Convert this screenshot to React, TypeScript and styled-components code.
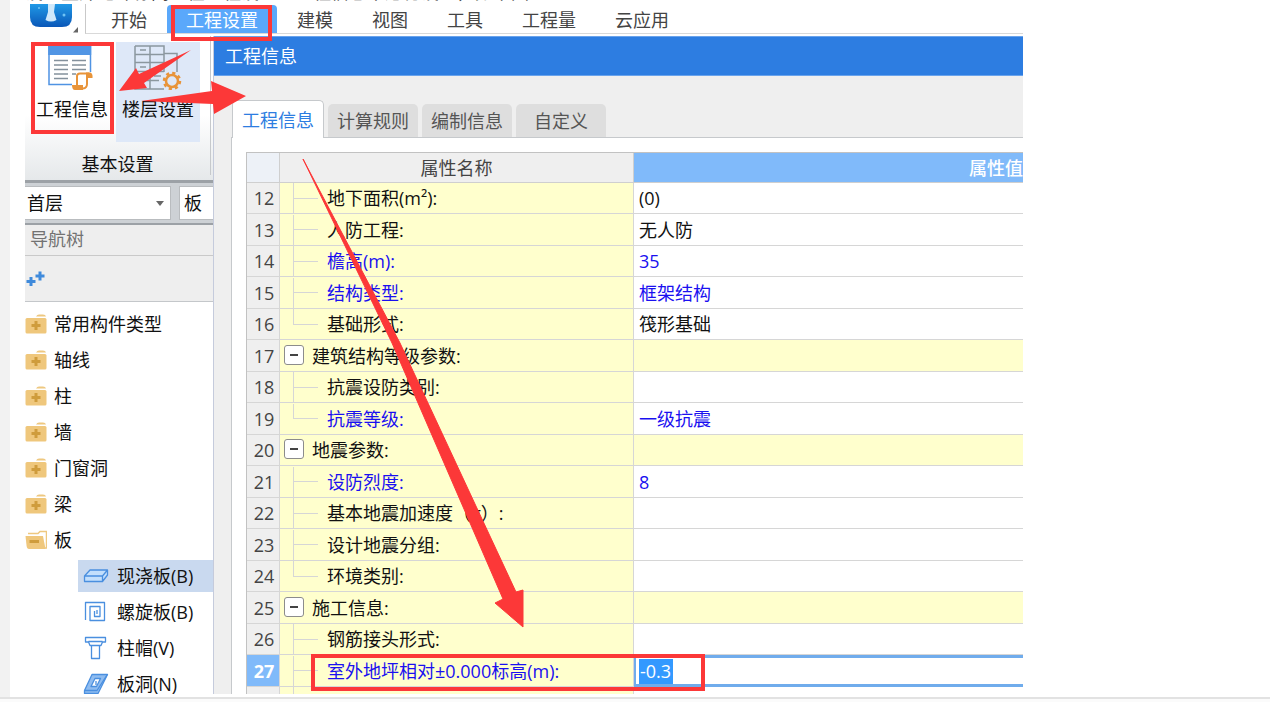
import React from "react";
import styled, { createGlobalStyle } from "styled-components";

const Global = createGlobalStyle`
  *, *::before, *::after { box-sizing: border-box; }
  body { margin: 0; background: #fff; }
  body, button, input, select {
    font-family: "Open Sans", "Noto Sans CJK SC", sans-serif;
    font-size: 18px;
    line-height: 26px;
  }
  button { border: 0; padding: 0; background: none; color: inherit; white-space: nowrap; }
`;

const Page = styled.main`
  position: relative;
  display: flex;
  flex-direction: column;
  height: 100vh;
  overflow: hidden;
`;

const Body = styled.div`
  flex: 1;
  min-height: 0;
  display: flex;
  flex-direction: column;
  padding: 0 247px 3px 15px;
  border-left: 10px solid #f2f2f2;
`;

const Footer = styled.footer`
  height: 5px;
  border-top: 2px solid #e2e2e2;
  background: #fbfbfb;
`;

const Caption = styled.p`
  display: flex;
  align-items: flex-end;
  height: 3px;
  margin: 0 0 1px;
  overflow: hidden;
  color: #444;
  white-space: nowrap;
  line-height: 22px;
`;

const Window = styled.div`
  flex: 1;
  min-height: 0;
  display: flex;
  flex-direction: column;
  overflow: hidden;
`;

const MenuBar = styled.header`
  display: flex;
  height: 32px;
  padding-bottom: 2px;
`;

const LogoBox = styled.div`
  width: 60px;
  padding-left: 5px;
`;

const Menu = styled.nav`
  flex: 1;
  display: flex;
  align-items: flex-end;
  gap: 1px;
  padding-left: 6px;
  border-left: 1px solid #c9c9c9;
  border-bottom: 1px solid #d9d9d9;
`;

const MenuTab = styled.button<{ $active?: boolean }>`
  height: 28px;
  padding: 2px 19px 0;
  border-radius: 4px 4px 0 0;
  background: ${(p) => (p.$active ? "#5aa8fb" : "transparent")};
  color: ${(p) => (p.$active ? "#fff" : "#444")};
`;

const Main = styled.div`
  flex: 1;
  min-height: 0;
  display: flex;
`;

const Side = styled.aside`
  flex: none;
  display: flex;
  flex-direction: column;
  width: 188px;
`;

const Ribbon = styled.section`
  display: flex;
  flex-direction: column;
  height: 147px;
  padding: 6px 0 2px 7px;
  border-bottom: 3px solid #9ca1a6;
  background:
    linear-gradient(#c6c9cc, #c6c9cc) 185px 0 / 1px 139px no-repeat,
    linear-gradient(#fff 55%, #e5e8ea);
`;

const RibbonButtons = styled.div`
  display: flex;
  gap: 4px;
`;

const RibbonButton = styled.button<{ $lit?: boolean }>`
  display: flex;
  flex-direction: column;
  align-items: center;
  width: ${(p) => (p.$lit ? "84px" : "80px")};
  height: 100px;
  color: #111;
  background: ${(p) => (p.$lit ? "#dee8f8" : "transparent")};
`;

const RibbonIcon = styled.svg`
  width: 48px;
  height: 48px;
  margin-bottom: 6px;
`;

const RibbonTitle = styled.div`
  padding-top: 8px;
  padding-right: 10px;
  color: #111;
  text-align: center;
  line-height: 28px;
`;

const Pickers = styled.div`
  display: flex;
  gap: 8px;
  height: 42px;
  padding: 3px 0;
  border-bottom: 2px solid #9ca1a6;
  background: #cdd1d5;
`;

const Picker = styled.div<{ $wide?: boolean }>`
  display: flex;
  align-items: center;
  flex: ${(p) => (p.$wide ? "0 0 146px" : "1")};
  padding-right: 6px;
  overflow: hidden;
  border: 1px solid #b9bcbf;
  border-width: ${(p) => (p.$wide ? "1px 1px 1px 0" : "1px 0 1px 1px")};
  background: #fff;
`;

const PickerSelect = styled.select<{ $indent?: boolean }>`
  flex: 1;
  min-width: 0;
  padding: 0 0 0 ${(p) => (p.$indent ? "4px" : "2px")};
  border: 0;
  appearance: none;
  background: none;
  color: #111;
`;

const SideTitle = styled.h2`
  margin: 0;
  padding: 1px 5px 2px;
  border-bottom: 1px solid #c9c9c9;
  background: #eee;
  color: #727272;
  font-size: 18px;
  font-weight: 400;
  line-height: 27px;
`;

const SideTools = styled.div`
  height: 46px;
  padding: 12px 1px;
  border-bottom: 1px solid #c4c7ca;
  background: #eee;
`;

const ToolButton = styled.button`
  display: block;
`;

const Tree = styled.ul`
  flex: 1;
  min-height: 0;
  margin: 0;
  padding: 4px 0 0;
  overflow: hidden;
  list-style: none;
`;

const TreeItem = styled.li<{ $child?: boolean; $selected?: boolean }>`
  display: flex;
  align-items: center;
  gap: ${(p) => (p.$child ? "8px" : "7px")};
  height: ${(p) => (p.$child ? "32px" : "36px")};
  margin: ${(p) => (p.$child ? "2px 0 4px 53px" : "0")};
  padding-left: ${(p) => (p.$child ? "5px" : "0")};
  background: ${(p) => (p.$selected ? "#c9d9ef" : "transparent")};
  color: #111;
  white-space: nowrap;
`;

const Dialog = styled.section`
  flex: 1;
  min-width: 0;
  display: flex;
  flex-direction: column;
  border-left: 1px solid #c5cbdc;
  background: #efefef;
`;

const DialogTitle = styled.h1`
  margin: 0;
  padding: 0 11px;
  border: 1px solid #69a3ec;
  border-width: 1px 0;
  background: #2d7de1;
  color: #fff;
  font-size: 18px;
  font-weight: 400;
  line-height: 38px;
`;

const DialogTabs = styled.div`
  display: flex;
  align-items: flex-end;
  gap: 4px;
  height: 61px;
  padding-left: 18px;
`;

const DialogTab = styled.button<{ $active?: boolean }>`
  position: relative;
  width: ${(p) => (p.$active ? "92px" : "90px")};
  height: ${(p) => (p.$active ? "38px" : "33px")};
  margin-bottom: ${(p) => (p.$active ? "-1px" : "0")};
  border: ${(p) => (p.$active ? "1px solid #c6c9cc" : "0")};
  border-bottom: 0;
  border-radius: 5px 5px 0 0;
  background: ${(p) => (p.$active ? "#fff" : "#dedede")};
  color: ${(p) => (p.$active ? "#2d7de1" : "#555")};
`;

const Panel = styled.div`
  flex: 1;
  min-height: 0;
  margin-left: 17px;
  padding: 14px 0 0 14px;
  overflow: hidden;
  border: 1px solid #c6c9cc;
  border-width: 1px 0 0 1px;
  background: #fff;
`;

const Grid = styled.table`
  width: 100%;
  table-layout: fixed;
  border-collapse: separate;
  border-spacing: 0;
  border: 1px solid #c2c2c2;
  border-width: 1px 0 0 1px;
  color: #222;
`;

const HeadCell = styled.th<{ $kind: "corner" | "name" | "value" }>`
  width: ${(p) => ({ corner: "33px", name: "354px", value: "auto" })[p.$kind]};
  height: 30px;
  padding: 0;
  border: 0 solid #cfcfcf;
  border-width: 0 ${(p) => (p.$kind === "value" ? "0" : "1px")} 1px 0;
  background: ${(p) => ({ corner: "#edf1f7", name: "#efefef", value: "#80bafa" })[p.$kind]};
  color: ${(p) => (p.$kind === "value" ? "#fff" : "#444")};
  font-weight: ${(p) => (p.$kind === "value" ? "500" : "400")};
  text-align: ${(p) => (p.$kind === "value" ? "right" : "center")};
`;

const Row = styled.tr`
  height: 31px;
  &:nth-child(even) { height: 32px; }
`;

const NumberCell = styled.th<{ $current?: boolean }>`
  padding: 0 0 0 2px;
  border: 0 solid #d6d6d6;
  border-width: 0 1px 1px 0;
  background: ${(p) => (p.$current ? "#80bafa" : "#efefef")};
  color: ${(p) => (p.$current ? "#fff" : "#444")};
  font-weight: ${(p) => (p.$current ? "700" : "400")};
`;

const NameCell = styled.td<{ $blue?: boolean }>`
  height: inherit;
  padding: 0;
  border: 0 solid #d6d6d6;
  border-width: 0 1px 1px 0;
  background: #ffffcd;
  color: ${(p) => (p.$blue ? "#1a10f0" : "#111")};
`;

const NameLine = styled.div`
  display: flex;
  align-items: center;
  height: 30px;
  white-space: nowrap;
`;

const Branch = styled.span`
  display: flex;
  flex-direction: column;
  align-self: stretch;
  width: 25px;
  margin: 0 9px 0 13px;
`;

const BranchHalf = styled.span<{ $line: boolean; $arm?: boolean }>`
  flex: 1;
  border: 0 solid #d6d6d6;
  border-left-width: ${(p) => (p.$line ? "1px" : "0")};
  border-bottom-width: ${(p) => (p.$arm ? "1px" : "0")};
`;

const Toggle = styled.button`
  display: flex;
  align-items: center;
  justify-content: center;
  width: 20px;
  height: 20px;
  margin: 0 8px 2px 4px;
  border: 1px solid #8c8c8c;
  border-radius: 3px;
  background: #fff;
  color: #333;
`;

const ValueCell = styled.td<{ $group?: boolean; $blue?: boolean; $editing?: boolean }>`
  padding: 0 0 0 ${(p) => (p.$editing ? "3px" : "5px")};
  border: 0 solid #d6d6d6;
  border-bottom-width: 1px;
  background: ${(p) => (p.$group ? "#ffffcd" : "#fff")};
  color: ${(p) => (p.$blue ? "#1a10f0" : "#111")};
  ${(p) => p.$editing && "border: 3px solid #70acec; border-width: 3px 0 3px 2px;"}
`;

const ValueInput = styled.input`
  display: block;
  width: 34px;
  height: 25px;
  padding: 0 0 0 1px;
  border: 0;
  background: #3399ff;
  color: #fff;
  line-height: 25px;
`;

const Annotations = styled.svg`
  position: absolute;
  top: 0;
  left: 0;
  width: 1270px;
  height: 702px;
  pointer-events: none;
`;

const Logo = () => (
  <svg width="49" height="30" viewBox="0 0 49 30" aria-hidden="true">
    <defs>
      <linearGradient id="logo" x1="0" y1="0" x2="0" y2="1">
        <stop offset="0" stopColor="#2099e6" />
        <stop offset="1" stopColor="#0a57b8" />
      </linearGradient>
    </defs>
    <path d="M0 0H42V13Q42 23 32 23H10Q0 23 0 13Z" fill="url(#logo)" />
    <path d="M18 0H25L24 8L26.500 16Q21 19 15.500 16L18 8Z" fill="#cfe8fa" />
    <circle cx="34" cy="11" r="1.500" fill="#6fc3f5" />
    <circle cx="9" cy="4" r="1" fill="#6fc3f5" />
    <path d="M48 23V28.500H43Z" fill="#666" />
  </svg>
);

const InfoIcon = () => (
  <RibbonIcon viewBox="8 0 48 48" aria-hidden="true">
    <path d="M9 4V42.500H32M50.500 4V30" fill="none" stroke="#4f93e3" strokeWidth="1.500" />
    <rect x="8.200" y="4" width="43" height="9" fill="#5195e4" />
    <path d="M14 18.500H28M14 23H28M14 27.500H28M14 32H28M14 36.500H28M32 18.500H46M32 23H46M32 27.500H46M32 32H36" stroke="#84919c" strokeWidth="1.500" />
    <path d="M37 43V34Q37 31.500 40 31.500H49Q47 32 47 35V42Q47 46 43 46.500" fill="#fff" stroke="#e8943a" strokeWidth="2" />
    <path d="M46 30.500H50Q53 31 52.500 36H46ZM32 43H43V48H35Q32 48 32 43Z" fill="#e8943a" />
  </RibbonIcon>
);

const FloorIcon = () => (
  <RibbonIcon viewBox="3 0 48 48" aria-hidden="true">
    <path d="M4 4H33V30M4 4V47H33M19 4V47M4 12.500H33M4 20.500H33M4 29.500H33M4 38.500H28M33 11.500H46V30M9 8H15M9 25H15M9 34H15M23 34H30" fill="none" stroke="#8b979f" strokeWidth="1.500" />
    <circle cx="41" cy="39" r="10" fill="#dee8f8" />
    <circle cx="41" cy="39" r="6" fill="none" stroke="#e8943a" strokeWidth="2.500" />
    <circle cx="41" cy="39" r="8" fill="none" stroke="#e8943a" strokeWidth="2.500" strokeDasharray="3.200 3.080" />
  </RibbonIcon>
);

const FolderIcon = () => (
  <svg width="22" height="20" viewBox="0 0 22 20" aria-hidden="true">
    <path d="M11 2.500Q12 0.500 14 0.500H18Q20.500 0.500 21 2.500Z" fill="#eec880" />
    <rect x="0.500" y="4" width="21" height="15.500" rx="1.500" fill="#efc77c" />
    <path d="M11 7V16M6.500 11.500H15.500" stroke="#cf9c3c" strokeWidth="3" />
  </svg>
);

const OpenFolderIcon = () => (
  <svg width="22" height="20" viewBox="0 0 22 20" aria-hidden="true">
    <path d="M3 3.500H13L15 1.500H21.500V18H19" fill="#fff" stroke="#eec880" strokeWidth="1.500" />
    <path d="M0.500 6H18L20.500 19H4Q2 19 1.600 16Z" fill="#efc77c" />
    <path d="M4.500 11.500H14" stroke="#cf9c3c" strokeWidth="3" />
  </svg>
);

const stroke = { fill: "none", stroke: "#4a8fdf", strokeWidth: 1.3, strokeLinejoin: "round" as const };

const SlabIcon = () => (
  <svg width="26" height="24" viewBox="0 0 26 24" aria-hidden="true">
    <path d="M1.500 12L7 6H24.500V11L19.500 17.500H1.500ZM1.500 12H19.500V17.500M19.500 12L24.500 6" {...stroke} fill="#c3dffc" />
  </svg>
);

const SpiralIcon = () => (
  <svg width="26" height="24" viewBox="0 0 26 24" aria-hidden="true">
    <path d="M2.500 20V2.500H21.500V20.500H7V6.500H17V16.500H11.500V11" {...stroke} />
    <path d="M14 10V14" {...stroke} />
  </svg>
);

const CapIcon = () => (
  <svg width="26" height="24" viewBox="0 0 26 24" aria-hidden="true">
    <path d="M2.500 1.500H22.500V6H19.500L18 9.500H7L5.500 6H2.500ZM5.500 5.500H19.500M8.500 9.500V22.500H16.500V9.500" {...stroke} />
  </svg>
);

const HoleIcon = () => (
  <svg width="26" height="24" viewBox="0 0 26 24" aria-hidden="true">
    <path d="M9 2.500H24.500L15 21.500H1.500V18.500Z" {...stroke} fill="#8fbcf0" />
    <path d="M1.500 18.500H14L24 3" {...stroke} />
    <path d="M12 6.500H17.500L13.500 14.500H8Z" {...stroke} fill="#fff" />
    <path d="M13 9V13" {...stroke} />
  </svg>
);

const menus = ["开始", "工程设置", "建模", "视图", "工具", "工程量", "云应用"];
const dialogTabs = ["工程信息", "计算规则", "编制信息", "自定义"];
const folders = ["常用构件类型", "轴线", "柱", "墙", "门窗洞", "梁"];
const slabs = [
  { label: "现浇板(B)", Icon: SlabIcon },
  { label: "螺旋板(B)", Icon: SpiralIcon },
  { label: "柱帽(V)", Icon: CapIcon },
  { label: "板洞(N)", Icon: HoleIcon },
];

type Property = {
  no: number;
  name: string;
  value?: string;
  blue?: boolean;
  group?: boolean;
  last?: boolean;
  editing?: boolean;
};

const properties: Property[] = [
  { no: 12, name: "地下面积(m²):", value: "(0)" },
  { no: 13, name: "人防工程:", value: "无人防" },
  { no: 14, name: "檐高(m):", value: "35", blue: true },
  { no: 15, name: "结构类型:", value: "框架结构", blue: true },
  { no: 16, name: "基础形式:", value: "筏形基础", last: true },
  { no: 17, name: "建筑结构等级参数:", group: true },
  { no: 18, name: "抗震设防类别:" },
  { no: 19, name: "抗震等级:", value: "一级抗震", blue: true, last: true },
  { no: 20, name: "地震参数:", group: true },
  { no: 21, name: "设防烈度:", value: "8", blue: true },
  { no: 22, name: "基本地震加速度（g）:" },
  { no: 23, name: "设计地震分组:" },
  { no: 24, name: "环境类别:", last: true },
  { no: 25, name: "施工信息:", group: true },
  { no: 26, name: "钢筋接头形式:" },
  { no: 27, name: "室外地坪相对±0.000标高(m):", value: "-0.3", blue: true, editing: true },
];

const PropertyRow = ({ no, name, value, blue, group, last, editing }: Property) => (
  <Row>
    <NumberCell scope="row" $current={editing}>{no}</NumberCell>
    <NameCell $blue={blue}>
      <NameLine>
        {group ? (
          <Toggle aria-label="折叠">
            <svg width="8" height="2" aria-hidden="true"><rect width="8" height="2" fill="#444" /></svg>
          </Toggle>
        ) : (
          <Branch>
            <BranchHalf $line $arm />
            <BranchHalf $line={!last} />
          </Branch>
        )}
        {editing ? <label htmlFor="elevation">{name}</label> : name}
      </NameLine>
    </NameCell>
    <ValueCell $group={group} $blue={blue} $editing={editing}>
      {editing ? <ValueInput id="elevation" defaultValue={value} /> : value}
    </ValueCell>
  </Row>
);

export default function App() {
  return (
    <Page>
      <Global />
      <Body>
        <Caption>设置室外地坪标高：在工程设置—工程信息中进行设置，如下图</Caption>
        <Window>
          <MenuBar>
            <LogoBox><Logo /></LogoBox>
            <Menu>
              {menus.map((m) => <MenuTab key={m} $active={m === "工程设置"}>{m}</MenuTab>)}
            </Menu>
          </MenuBar>
          <Main>
            <Side>
              <Ribbon>
                <RibbonButtons>
                  <RibbonButton><InfoIcon />工程信息</RibbonButton>
                  <RibbonButton $lit><FloorIcon />楼层设置</RibbonButton>
                </RibbonButtons>
                <RibbonTitle>基本设置</RibbonTitle>
              </Ribbon>
              <Pickers>
                <Picker $wide>
                  <PickerSelect aria-label="楼层"><option>首层</option></PickerSelect>
                  <svg width="8" height="5" aria-hidden="true"><path d="M0 0H8L4 5Z" fill="#666" /></svg>
                </Picker>
                <Picker>
                  <PickerSelect aria-label="构件" $indent><option>板</option></PickerSelect>
                </Picker>
              </Pickers>
              <SideTitle>导航树</SideTitle>
              <SideTools>
                <ToolButton aria-label="添加">
                  <svg width="19" height="17" viewBox="0 0 19 17" aria-hidden="true">
                    <path d="M5 6V15M0.500 10.500H9.500M14 0.500V9.500M9.500 5H18.500" stroke="#3f8adb" strokeWidth="3" />
                  </svg>
                </ToolButton>
              </SideTools>
              <Tree>
                {folders.map((f) => <TreeItem key={f}><FolderIcon />{f}</TreeItem>)}
                <TreeItem><OpenFolderIcon />板</TreeItem>
                {slabs.map(({ label, Icon }, i) => (
                  <TreeItem key={label} $child $selected={i === 0}><Icon />{label}</TreeItem>
                ))}
              </Tree>
            </Side>
            <Dialog>
              <DialogTitle>工程信息</DialogTitle>
              <DialogTabs>
                {dialogTabs.map((t, i) => <DialogTab key={t} $active={i === 0}>{t}</DialogTab>)}
              </DialogTabs>
              <Panel>
                <Grid>
                  <thead>
                    <tr>
                      <HeadCell $kind="corner" />
                      <HeadCell $kind="name">属性名称</HeadCell>
                      <HeadCell $kind="value">属性值</HeadCell>
                    </tr>
                  </thead>
                  <tbody>
                    {properties.map((p) => <PropertyRow key={p.no} {...p} />)}
                    <Row>
                      <NumberCell scope="row" />
                      <NameCell><NameLine><Branch><BranchHalf $line /></Branch></NameLine></NameCell>
                      <ValueCell />
                    </Row>
                  </tbody>
                </Grid>
              </Panel>
            </Dialog>
          </Main>
        </Window>
      </Body>
      <Footer />
      <Annotations viewBox="0 0 1270 702" aria-hidden="true">
        <g fill="none" stroke="#fc3838" strokeWidth="4">
          <rect x="173" y="7" width="97" height="32" />
          <rect x="33" y="44" width="79" height="88" />
          <rect x="313" y="656" width="390" height="33" />
        </g>
        <g fill="#fc3838">
          <path d="M119 91L136 68L139 74L191 50L144 83L147 88Z" />
          <path d="M141 101L212 91L211 81L246 96L214 114L213 104Z" />
          <path d="M303 159L400 343L516 592L523 590V627L495 603L503 599L392 343Z" stroke="#fc3838" strokeLinejoin="round" />
        </g>
      </Annotations>
    </Page>
  );
}
